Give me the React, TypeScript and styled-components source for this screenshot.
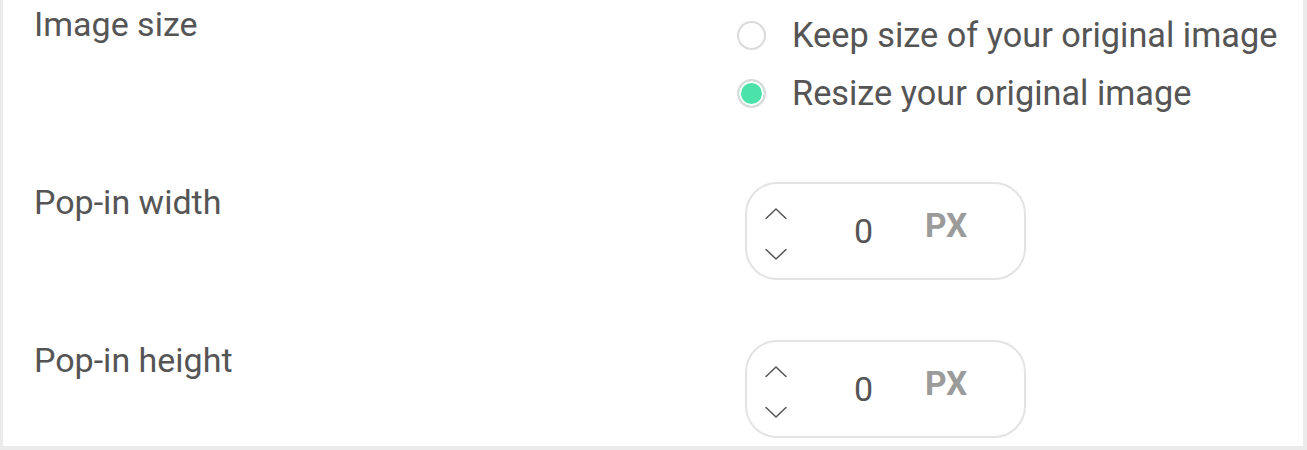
import React from "react";
import styled, { createGlobalStyle } from "styled-components";

const Global = createGlobalStyle`
  html, body { margin: 0; padding: 0; background: #fff; }
  body { font-family: Roboto, "Liberation Sans", sans-serif; }
  * { box-sizing: border-box; }
`;

const Panel = styled.div`
  width: 1307px;
  height: 450px;
  background: #fff;
  border-left: 3px solid #ebebeb;
  border-right: 4px solid #ebebeb;
  border-bottom: 4px solid #ebebeb;
  padding-top: 4px;
  display: flex;
  flex-direction: column;
  gap: 60px;
  overflow: hidden;
`;

const Row = styled.div`
  display: grid;
  grid-template-columns: 734px 1fr;
  align-items: start;
`;

const Label = styled.div`
  padding-left: 31px;
  font-size: 34px;
  line-height: 40px;
  color: #555;
`;

const RadioGroup = styled.div`
  display: flex;
  flex-direction: column;
  padding-top: 2px;
`;

const RadioOption = styled.label`
  height: 58px;
  display: flex;
  align-items: center;
  gap: 26px;
  font-size: 34.3px;
  color: #555;
`;

const RadioDot = styled.span<{ $checked?: boolean }>`
  width: 29px;
  height: 29px;
  border-radius: 50%;
  border: 2px solid #dadada;
  background: ${(p) => (p.$checked ? "#4be3a9" : "#fff")};
  box-shadow: ${(p) => (p.$checked ? "inset 0 0 0 2px #fff" : "none")};
  flex: none;
`;

const NumberBox = styled.div`
  margin-left: 8px;
  width: 281px;
  height: 98px;
  border: 2px solid #e3e3e3;
  border-radius: 32px;
  display: flex;
  align-items: center;
  padding-left: 17px;
`;

const Arrows = styled.div`
  display: flex;
  flex-direction: column;
  gap: 28px;
  color: #555;
  margin-top: 6px;
`;

const Value = styled.span`
  font-size: 34px;
  color: #555;
  margin-left: 66px;
`;

const Unit = styled.span`
  font-size: 33.5px;
  font-weight: 700;
  color: #9b9b9b;
  margin-left: 52px;
  margin-top: -12px;
`;

const Chevron = ({ up }: { up?: boolean }) => (
  <svg width="24" height="13" viewBox="0 0 24 13" fill="none">
    <path
      d={up ? "M2 11.5 L12 2 L22 11.5" : "M2 1.5 L12 11 L22 1.5"}
      stroke="currentColor"
      strokeWidth="1.5"
      strokeLinecap="round"
      strokeLinejoin="round"
    />
  </svg>
);

const NumberField = ({ value }: { value: number }) => (
  <NumberBox>
    <Arrows>
      <Chevron up />
      <Chevron />
    </Arrows>
    <Value>{value}</Value>
    <Unit>PX</Unit>
  </NumberBox>
);

export default function App() {
  return (
    <>
      <Global />
      <Panel>
        <Row>
          <Label>Image size</Label>
          <RadioGroup>
            <RadioOption>
              <RadioDot />
              Keep size of your original image
            </RadioOption>
            <RadioOption>
              <RadioDot $checked />
              Resize your original image
            </RadioOption>
          </RadioGroup>
        </Row>
        <Row>
          <Label>Pop-in width</Label>
          <NumberField value={0} />
        </Row>
        <Row>
          <Label>Pop-in height</Label>
          <NumberField value={0} />
        </Row>
      </Panel>
    </>
  );
}
